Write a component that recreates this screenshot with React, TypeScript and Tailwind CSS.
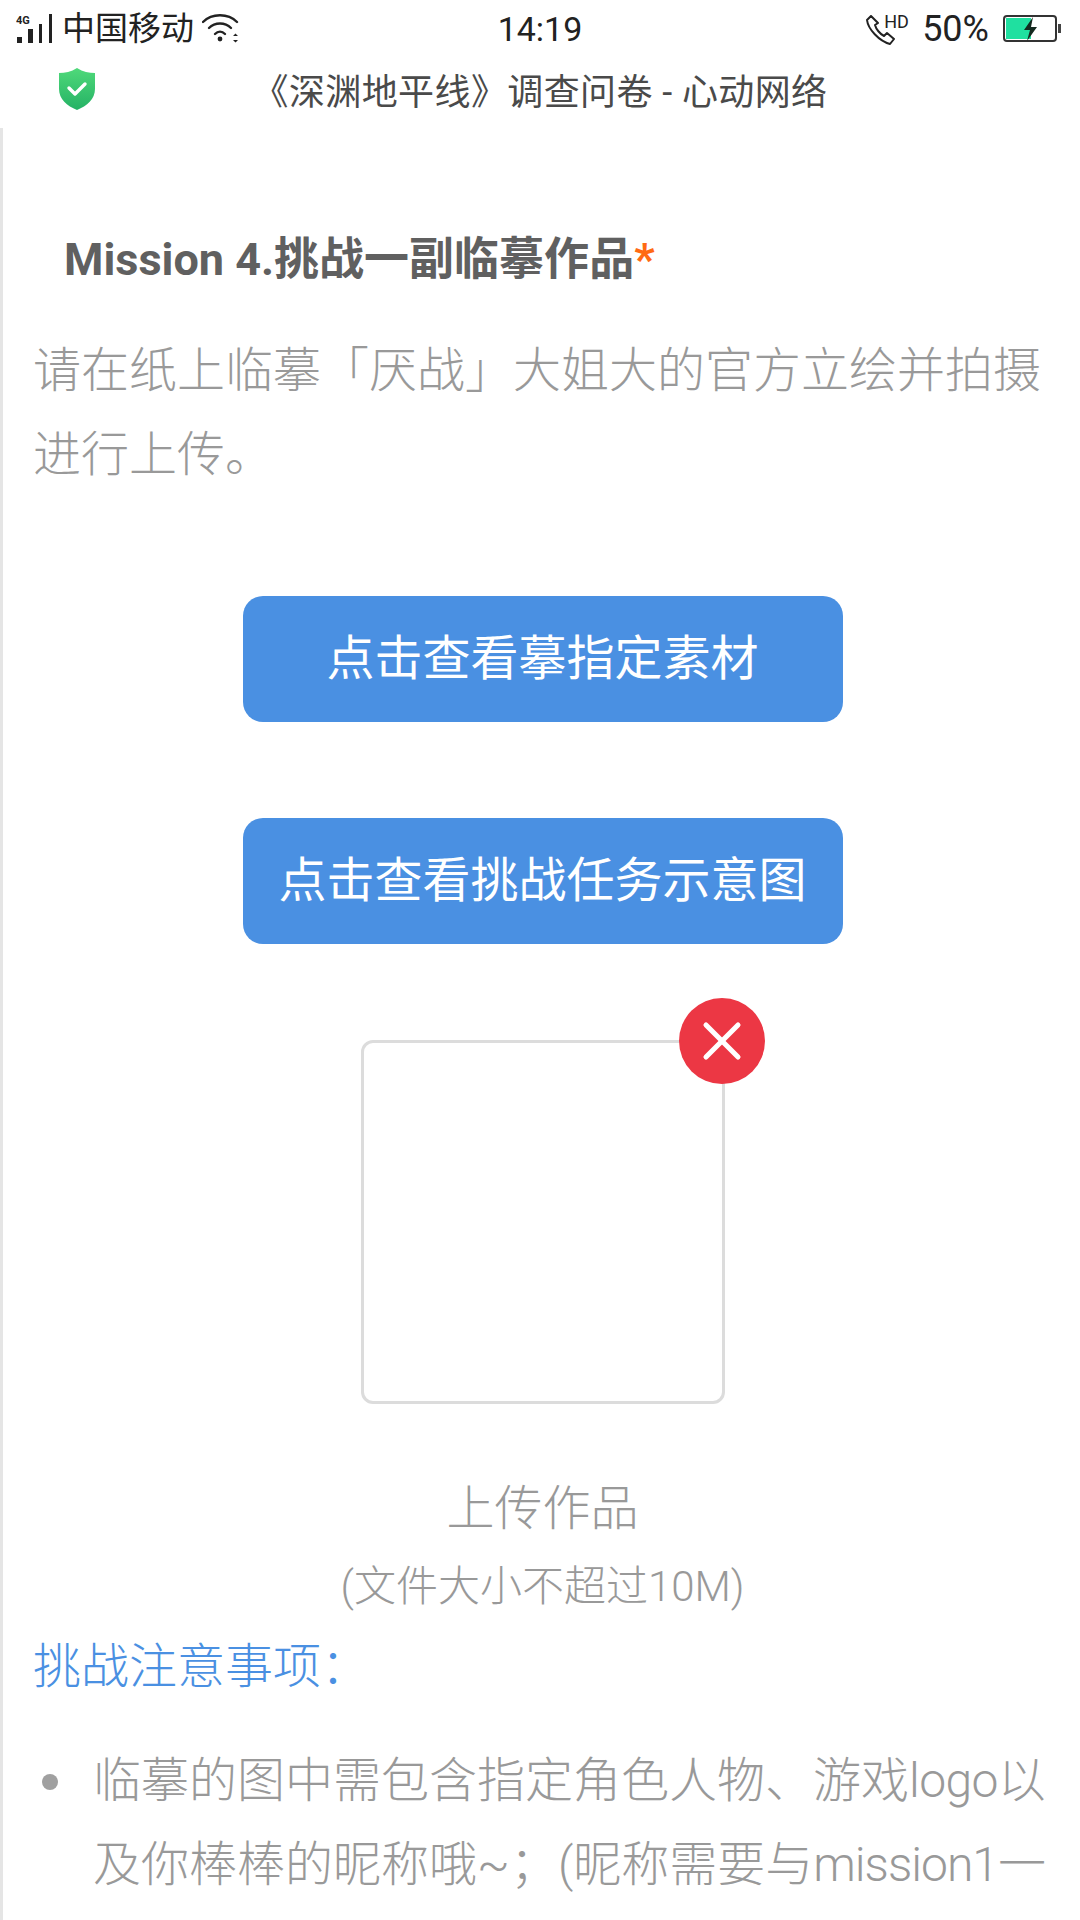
import { X } from 'lucide-react';

const font = { fontFamily: 'Roboto, "Noto Sans CJK SC", sans-serif' };

function SignalIcon() {
  return (
    <svg width="38" height="32" viewBox="0 0 38 32" className="block">
      <text x="0" y="11" fontSize="11" fontWeight="700" fill="#222" fontFamily="Roboto">4G</text>
      <rect x="1" y="24" width="5" height="6" fill="#222" />
      <rect x="12" y="16" width="5" height="14" fill="#222" />
      <rect x="23" y="11" width="3" height="19" fill="#222" />
      <rect x="33" y="1" width="3" height="29" fill="#222" />
    </svg>
  );
}

function WifiIcon() {
  return (
    <svg width="38" height="32" viewBox="0 0 38 32" fill="none" stroke="#222" strokeWidth="2.4" strokeLinecap="round" className="block">
      <path d="M1 9 C10 0 26 0 35 9" />
      <path d="M7 15 C13 9 23 9 29 15" />
      <path d="M13 21 C16 18 20 18 23 21" />
      <circle cx="18" cy="26" r="2.4" fill="#222" stroke="none" />
      <path d="M31 23 l2.5 -2.5 l2.5 2.5 Z M31 27 l2.5 2.5 l2.5 -2.5 Z" fill="#222" stroke="none" />
    </svg>
  );
}

function PhoneHdIcon() {
  return (
    <div className="relative w-[42px] h-[30px]">
      <svg width="30" height="30" viewBox="0 0 30 30" fill="none" stroke="#222" strokeWidth="2" strokeLinejoin="round" className="absolute left-0 top-[1px]">
        <path d="M5 1 L1 5 C2 14 13 26 24 29 L28 24 L21 18 L18 21 C14 19 10 14 9 10 L12 8 Z" />
      </svg>
      <span className="absolute left-[18px] top-[-2px] text-[18px] leading-[20px] text-[#222]">HD</span>
    </div>
  );
}

function BatteryIcon() {
  return (
    <svg width="58" height="28" viewBox="0 0 58 28" className="block">
      <rect x="1" y="1" width="52" height="25" rx="3" fill="#fff" stroke="#333" strokeWidth="2" />
      <rect x="3" y="3" width="25" height="21" fill="#1fe0a0" />
      <rect x="55" y="9" width="3" height="9" fill="#444" />
      <path d="M30 2 L21 15 H27 L24 26 L34 12 H28 Z" fill="#14291f" />
    </svg>
  );
}

function ShieldIcon() {
  return (
    <svg width="38" height="42" viewBox="0 0 38 42" className="block">
      <defs>
        <linearGradient id="shield" x1="0" y1="0" x2="0" y2="1">
          <stop offset="0" stopColor="#4fd97a" />
          <stop offset="1" stopColor="#25b265" />
        </linearGradient>
      </defs>
      <path d="M19 0 C25 4 31 5 37 5 V21 C37 31 29 38 19 42 C9 38 1 31 1 21 V5 C7 5 13 4 19 0 Z" fill="url(#shield)" />
      <path d="M11 20 L17 26 L27 16" fill="none" stroke="#fff" strokeWidth="3.4" strokeLinecap="round" strokeLinejoin="round" />
    </svg>
  );
}

function BlueButton({ label }: { label: string }) {
  return (
    <div className="w-[600px] h-[126px] mx-auto flex items-center justify-center rounded-[20px] bg-[#4a90e2] text-white text-[48px]">
      {label}
    </div>
  );
}

export default function App() {
  return (
    <div className="w-[1080px] h-[1920px] overflow-hidden bg-white" style={font}>
      <div className="h-[58px] px-4 flex items-center justify-between text-[#222]">
        <div className="flex items-center gap-2 w-[300px]">
          <SignalIcon />
          <span className="text-[33px] leading-[40px]">中国移动</span>
          <WifiIcon />
        </div>
        <span className="text-[34px] leading-[40px]">14:19</span>
        <div className="flex items-center justify-end gap-[14px] w-[300px] pr-[3px]">
          <PhoneHdIcon />
          <span className="text-[36px] leading-[40px]">50%</span>
          <BatteryIcon />
        </div>
      </div>

      <div className="h-[70px] relative flex items-center justify-center">
        <div className="absolute left-[58px] top-[10px]">
          <ShieldIcon />
        </div>
        <span className="text-[36px] leading-[44px] tracking-[0.4px] text-[#4a4a4a]">《深渊地平线》调查问卷 - 心动网络</span>
      </div>

      <div className="border-l-[3px] border-[#e5e5e5] pl-[30px] pr-[20px] h-[1792px]">
        <h2 className="pt-[107px] pl-[31px] text-[45px] leading-[50px] font-bold text-[#606060]">
          Mission 4.挑战一副临摹作品<span className="text-[#ff6a13]">*</span>
        </h2>
        <p className="mt-[44px] text-[48px] leading-[84px] font-light text-[#999999] whitespace-nowrap">
          请在纸上临摹「厌战」大姐大的官方立绘并拍摄
          <br />
          进行上传。
        </p>

        <div className="mt-[99px] flex flex-col gap-[96px] pr-[8px]">
          <BlueButton label="点击查看摹指定素材" />
          <BlueButton label="点击查看挑战任务示意图" />
        </div>

        <div className="relative w-[364px] h-[364px] mt-[96px] ml-[328px] rounded-xl border-[3px] border-[#dcdcdc]">
          <div className="absolute -right-[43px] -top-[45px] w-[86px] h-[86px] rounded-full bg-[#ec3744] flex items-center justify-center">
            <X size={64} color="#fff" strokeWidth={1.9} />
          </div>
        </div>

        <div className="mt-[77px] pr-[8px] text-center text-[48px] leading-[56px] font-light text-[#999999]">上传作品</div>
        <div className="mt-[26px] pr-[8px] text-center text-[42px] leading-[48px] font-light text-[#999999]">(文件大小不超过10M)</div>
        <div className="mt-[28px] text-[48px] leading-[56px] font-light text-[#4a90e2]">挑战注意事项：</div>

        <ul className="mt-[44px] text-[48px] leading-[84px] font-light text-[#999999]">
          <li className="relative pl-[60px] whitespace-nowrap">
            <span className="absolute left-[9px] top-[35px] w-[16px] h-[16px] rounded-full bg-[#a0a0a0]" />
            临摹的图中需包含指定角色人物、游戏<span className="tracking-[-0.6px]">logo</span>以
            <br />
            及你棒棒的昵称哦~；(昵称需要与<span className="tracking-[-1px]">mission1</span>一
          </li>
        </ul>
      </div>
    </div>
  );
}
